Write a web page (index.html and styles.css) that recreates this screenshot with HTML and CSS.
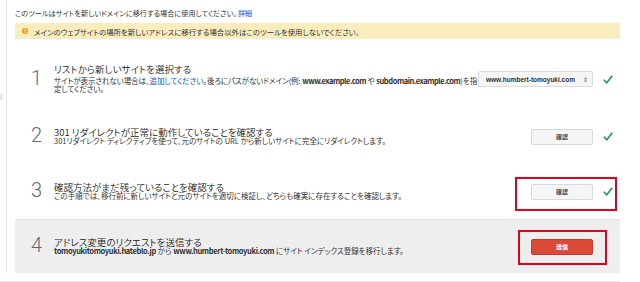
FILE: index.html
```html
<!DOCTYPE html>
<html lang="ja">
<head>
<meta charset="utf-8">
<title>サイトの移行</title>
<link rel="stylesheet" href="styles.css">
</head>
<body>
<div class="page">
  <div class="rail"><span class="rail-tab"></span></div>
  <div class="main">
    <p class="intro">このツールはサイトを新しいドメインに移行する場合に使用してください。<a class="link" href="#">詳細</a></p>
    <div class="warning">
      <span class="warn-icon">!</span>
      <span class="warn-text">メインのウェブサイトの場所を新しいアドレスに移行する場合以外はこのツールを使用しないでください。</span>
    </div>
    <ol class="steps">
      <li class="step step-first">
        <div class="num">1</div>
        <div class="body">
          <div class="title">リストから新しいサイトを選択する</div>
          <div class="desc desc-gap"><span class="line">サイトが表示されない場合は、<a class="link" href="#">追加してください</a>。後ろにパスがないドメイン(例: <b>www.example.com</b> や <b>subdomain.example.com</b>)を指</span><span class="line">定してください。</span></div>
        </div>
        <div class="action">
          <div class="select"><span class="select-value">www.humbert-tomoyuki.com</span><span class="select-arrows">&#8661;</span></div>
          <svg class="check" viewBox="0 0 10 9" width="10" height="9"><path d="M0.8 4.8 L3.8 7.8 L9.2 0.8" fill="none" stroke="#1a9e4e" stroke-width="1.6"/></svg>
        </div>
      </li>
      <li class="step">
        <div class="num">2</div>
        <div class="body">
          <div class="title">301 リダイレクトが正常に動作していることを確認する</div>
          <div class="desc">301リダイレクト ディレクティブを使って、元のサイトの URL から新しいサイトに完全にリダイレクトします。</div>
        </div>
        <div class="action">
          <button class="btn">確認</button>
          <svg class="check" viewBox="0 0 10 9" width="10" height="9"><path d="M0.8 4.8 L3.8 7.8 L9.2 0.8" fill="none" stroke="#1a9e4e" stroke-width="1.6"/></svg>
        </div>
      </li>
      <li class="step">
        <div class="num">3</div>
        <div class="body">
          <div class="title">確認方法がまだ残っていることを確認する</div>
          <div class="desc">この手順では、移行前に新しいサイトと元のサイトを適切に検証し、どちらも確実に存在することを確認します。</div>
        </div>
        <div class="action">
          <button class="btn">確認</button>
          <svg class="check" viewBox="0 0 10 9" width="10" height="9"><path d="M0.8 4.8 L3.8 7.8 L9.2 0.8" fill="none" stroke="#1a9e4e" stroke-width="1.6"/></svg>
          <span class="mark mark-3"></span>
        </div>
      </li>
      <li class="step step-last">
        <div class="num">4</div>
        <div class="body">
          <div class="title">アドレス変更のリクエストを送信する</div>
          <div class="desc"><b>tomoyukitomoyuki.hateblo.jp</b> から <b>www.humbert-tomoyuki.com</b> にサイト インデックス登録を移行します。</div>
        </div>
        <div class="action">
          <button class="btn btn-red">送信</button>
          <span class="check-space"></span>
          <span class="mark mark-4"></span>
        </div>
      </li>
    </ol>
  </div>
</div>
<div class="footer-line"></div>
</body>
</html>
```

FILE: styles.css
```css
* { box-sizing: border-box; }
html, body { margin: 0; padding: 0; background: #fff; }
body {
  font-family: "Noto Sans CJK JP", "Liberation Sans", sans-serif;
  font-feature-settings: "palt";
  color: #222;
}
.page {
  display: flex;
  width: 620px;
}
.rail {
  width: 6px;
  flex: none;
}
.rail-tab {
  display: block;
  width: 3px;
  height: 6px;
  margin-top: 94px;
  background: #e8e8e8;
}
.main {
  flex: 1;
  min-width: 0;
  border-left: 1px solid #e5e5e5;
  padding-left: 8px;
}
.intro {
  margin: 0;
  padding-top: 8px;
  font-size: 7.2px;
  line-height: 10px;
  height: 18px;
  color: #333;
}
.intro .link { margin-left: 1px; }
.link { color: #1155cc; text-decoration: none; }
.warning {
  display: flex;
  align-items: center;
  height: 16px;
  margin-top: 5px;
  background: #f9edbe;
  padding-left: 7px;
  font-size: 7.4px;
  color: #333;
}
.warn-icon {
  width: 6px;
  height: 6px;
  border-radius: 50%;
  background: #f0a30a;
  color: #fff;
  font-family: "Liberation Sans", sans-serif;
  font-size: 5px;
  font-weight: bold;
  line-height: 6px;
  text-align: center;
  margin-right: 6px;
}
.steps {
  list-style: none;
  margin: 10px 0 0;
  padding: 0;
}
.step {
  display: flex;
  align-items: center;
  height: 55px;
  padding-left: 16px;
  padding-right: 7px;
}
.step-first { height: 60px; }
.step-last {
  background: #eeeeee;
  border-top: 1px solid #e2e2e2;
  height: 54px;
}
.num {
  width: 23px;
  flex: none;
  padding-bottom: 3px;
  font-family: Roboto, "Liberation Sans", sans-serif;
  font-size: 20px;
  font-weight: 300;
  color: #676b70;
  line-height: 20px;
}
.body {
  flex: 1;
  min-width: 0;
}
.title {
  font-size: 9.5px;
  line-height: 9px;
  font-weight: 350;
  color: #222;
}
.desc {
  font-size: 7.5px;
  line-height: 8px;
  color: #333;
}
.desc-gap { margin-top: 3px; letter-spacing: -0.08px; }
.desc b { font-weight: 700; color: #333; letter-spacing: -0.35px; }
.desc-gap b { letter-spacing: -0.45px; }
.line { display: block; white-space: nowrap; }
.action {
  display: flex;
  flex: none;
  align-items: center;
  gap: 10px;
  position: relative;
}
.select {
  display: flex;
  align-items: center;
  justify-content: space-between;
  width: 115px;
  height: 16px;
  background: #f5f5f5;
  border: 1px solid #dcdcdc;
  border-radius: 2px;
  padding: 0 4px 0 7px;
  font-family: "Liberation Sans", sans-serif;
  font-size: 6.5px;
  font-weight: bold;
  color: #333;
}
.select-arrows { font-size: 6px; color: #555; font-weight: normal; }
.btn {
  width: 62px;
  height: 16px;
  margin: 0;
  padding: 0;
  background: #f5f5f5;
  border: 1px solid #d9d9d9;
  border-radius: 2px;
  font-family: "Noto Sans CJK JP", sans-serif;
  font-size: 6px;
  font-weight: bold;
  color: #444;
}
.btn-red {
  background: #d94a38;
  border-color: #c43c2c;
  color: #fff;
}
.check { display: block; flex: none; }
.check-space { display: block; width: 10px; height: 9px; }
.mark {
  position: absolute;
  border: 2px solid #e3001b;
}
.mark-3 { left: -16px; top: -7px; width: 102px; height: 34px; }
.mark-4 { left: -13px; top: -9px; width: 89px; height: 35px; }
.footer-line {
  width: 620px;
  height: 1px;
  margin-top: 8px;
  background: #e5e5e5;
}
```
